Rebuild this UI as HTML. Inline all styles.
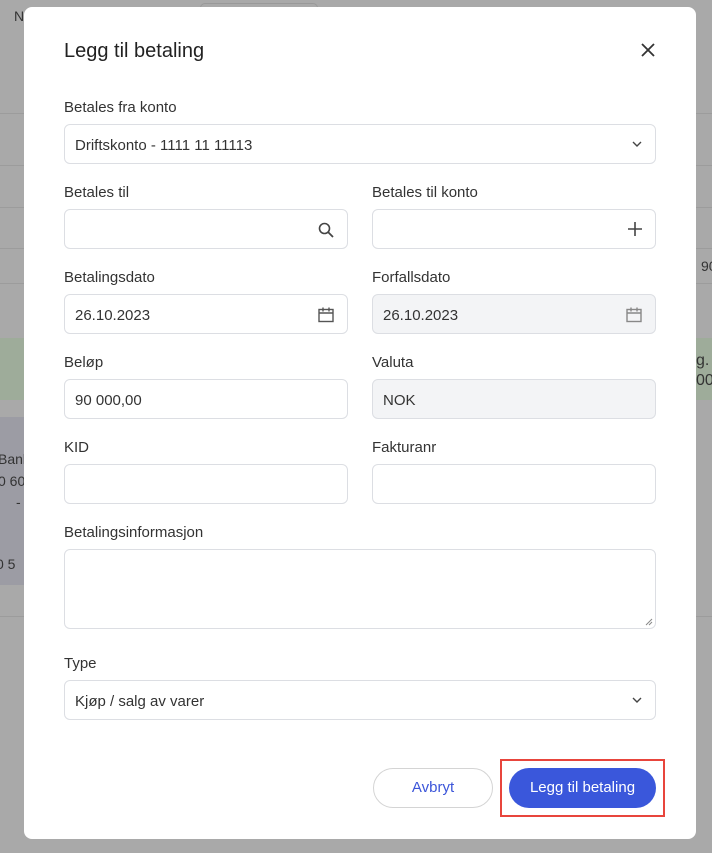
<!DOCTYPE html>
<html><head><meta charset="utf-8"><style>
*{box-sizing:border-box;margin:0;padding:0}
body{width:712px;height:853px;overflow:hidden;background:#a9a9a9;font-family:"Liberation Sans",sans-serif;position:relative;color:#222}
.bg{position:absolute;font-size:14px;color:#333}
.hl{position:absolute;left:0;right:0;height:1px;background:#9c9c9c}
.modal{position:absolute;left:24px;top:7px;width:672px;height:832px;background:#fff;border-radius:8px}
.t{position:absolute;left:40px;top:33px;font-size:20px;color:#222}
.x{position:absolute;left:616px;top:35px}
.lab{position:absolute;font-size:15px;color:#333;margin-top:1px}
.in{position:absolute;height:40px;border:1px solid #dcdee3;border-radius:6px;font-size:15px;color:#333;padding:12px 10px 0;background:#fff}
.dis{background:#f3f4f6}
.ic{position:absolute;right:12px;top:11px}
.btn{position:absolute;height:40px;border-radius:20px;font-size:15px;text-align:center;line-height:40px}
</style></head><body>
<div class="hl" style="top:113px"></div>
<div class="hl" style="top:165px"></div>
<div class="hl" style="top:207px"></div>
<div class="hl" style="top:248px"></div>
<div class="hl" style="top:283px"></div>
<div class="hl" style="top:616px"></div>
<div style="position:absolute;left:0;top:338px;width:24px;height:62px;background:#9eac9a"></div>
<div style="position:absolute;left:696px;top:338px;width:16px;height:62px;background:#9eac9a"></div>
<div style="position:absolute;left:0;top:417px;width:24px;height:168px;background:#9c9ca4"></div>
<div style="position:absolute;left:200px;top:3px;width:118px;height:8px;border:1px solid #999;border-bottom:none;border-radius:5px 5px 0 0"></div>
<div class="bg" style="left:14px;top:8px">N</div>
<div class="bg" style="left:-2px;top:451px">Bank</div>
<div class="bg" style="left:-2px;top:473px">0 60</div>
<div class="bg" style="left:16px;top:494px">-</div>
<div class="bg" style="left:-4px;top:556px">0 5</div>
<div class="bg" style="left:701px;top:258px">90</div>
<div class="bg" style="left:696px;top:352px;font-size:16px">g.</div>
<div class="bg" style="left:696px;top:372px;font-size:16px">00</div>
<div class="modal">
<div class="t">Legg til betaling</div>
<svg class="x" width="16" height="16" viewBox="0 0 16 16"><path d="M2 2L14 14M14 2L2 14" stroke="#333" stroke-width="1.8"/></svg>

<div class="lab" style="left:40px;top:91px">Betales fra konto</div>
<div class="in" style="left:40px;top:117px;width:592px">Driftskonto - 1111 11 11113<svg class="ic" style="top:15px" width="12" height="8" viewBox="0 0 12 8"><path d="M2 2l4 4 4-4" stroke="#444" stroke-width="1.4" fill="none"/></svg></div>

<div class="lab" style="left:40px;top:176px">Betales til</div>
<div class="in" style="left:40px;top:202px;width:284px"><svg class="ic" width="18" height="18" viewBox="0 0 18 18"><circle cx="7.5" cy="7.5" r="5" stroke="#444" stroke-width="1.6" fill="none"/><path d="M11 11l5 5" stroke="#444" stroke-width="1.8"/></svg></div>
<div class="lab" style="left:348px;top:176px">Betales til konto</div>
<div class="in" style="left:348px;top:202px;width:284px"><svg class="ic" width="16" height="16" viewBox="0 0 16 16"><path d="M8 1v14M1 8h14" stroke="#444" stroke-width="1.6"/></svg></div>

<div class="lab" style="left:40px;top:261px">Betalingsdato</div>
<div class="in" style="left:40px;top:287px;width:284px">26.10.2023<svg class="ic" width="18" height="18" viewBox="0 0 18 18"><rect x="2" y="3.5" width="14" height="12" stroke="#555" stroke-width="1.4" fill="none"/><path d="M2 7h14M6 1.5v4M12 1.5v4" stroke="#555" stroke-width="1.4"/></svg></div>
<div class="lab" style="left:348px;top:261px">Forfallsdato</div>
<div class="in dis" style="left:348px;top:287px;width:284px">26.10.2023<svg class="ic" width="18" height="18" viewBox="0 0 18 18"><rect x="2" y="3.5" width="14" height="12" stroke="#888" stroke-width="1.4" fill="none"/><path d="M2 7h14M6 1.5v4M12 1.5v4" stroke="#888" stroke-width="1.4"/></svg></div>

<div class="lab" style="left:40px;top:346px">Beløp</div>
<div class="in" style="left:40px;top:372px;width:284px">90 000,00</div>
<div class="lab" style="left:348px;top:346px">Valuta</div>
<div class="in dis" style="left:348px;top:372px;width:284px">NOK</div>

<div class="lab" style="left:40px;top:431px">KID</div>
<div class="in" style="left:40px;top:457px;width:284px"></div>
<div class="lab" style="left:348px;top:431px">Fakturanr</div>
<div class="in" style="left:348px;top:457px;width:284px"></div>

<div class="lab" style="left:40px;top:516px">Betalingsinformasjon</div>
<div class="in" style="left:40px;top:542px;width:592px;height:80px"><svg style="position:absolute;right:2px;bottom:2px" width="8" height="8" viewBox="0 0 8 8"><path d="M7 1L1 7M7 4L4 7" stroke="#888"/></svg></div>

<div class="lab" style="left:40px;top:647px">Type</div>
<div class="in" style="left:40px;top:673px;width:592px">Kjøp / salg av varer<svg class="ic" style="top:15px" width="12" height="8" viewBox="0 0 12 8"><path d="M2 2l4 4 4-4" stroke="#444" stroke-width="1.4" fill="none"/></svg></div>

<div class="btn" style="left:349px;top:761px;width:120px;border:1px solid #d4d4d4;color:#3b55d9;line-height:38px">Avbryt</div>
<div style="position:absolute;left:476px;top:752px;width:165px;height:58px;border:2px solid #e8453c"></div>
<div class="btn" style="left:485px;top:761px;width:147px;background:#3a57db;color:#fff">Legg til betaling</div>
</div>
</body></html>
